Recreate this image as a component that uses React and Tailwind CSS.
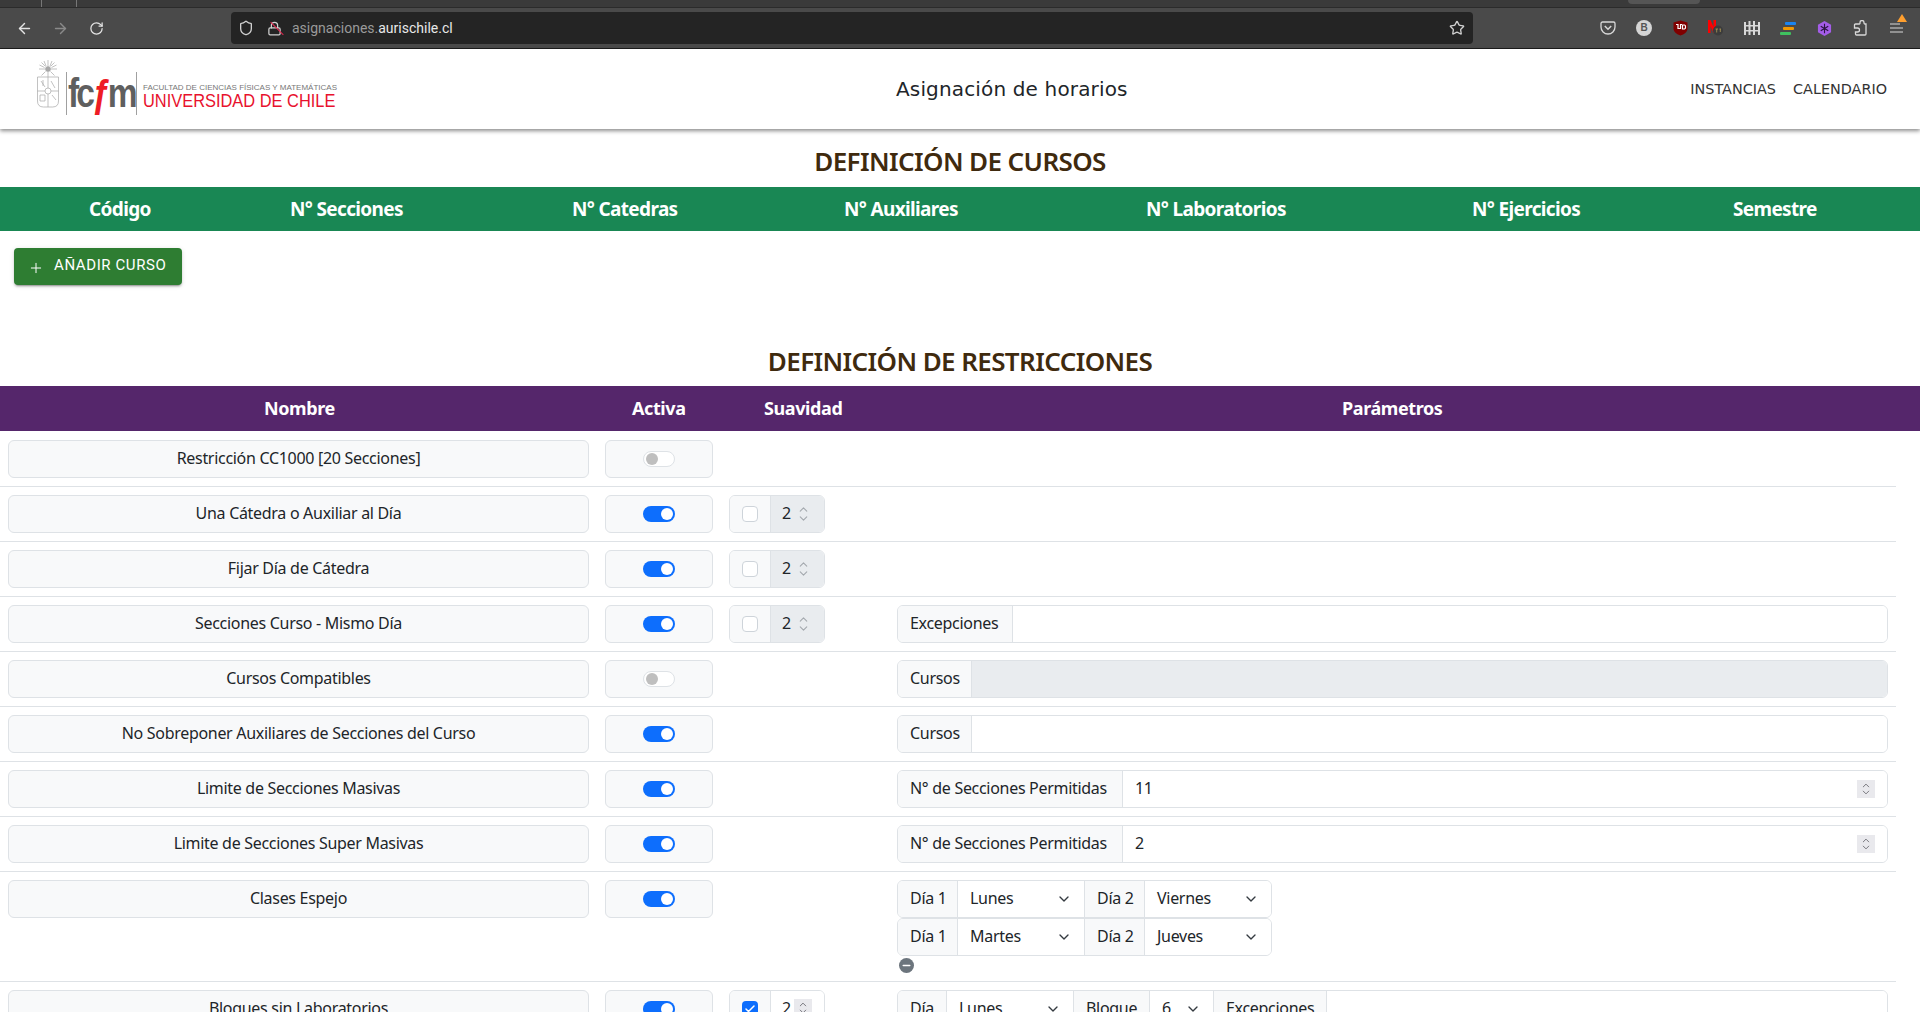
import React from "react";
import { ArrowLeft, ArrowRight, RotateCw, Shield, Lock, Star, Plus, ChevronDown, ChevronUp, Check, Minus } from "lucide-react";

const FONT = "font-['Noto_Sans',sans-serif]";

const Tool = ({ children }) => <div className="flex w-9 h-8 items-center justify-center">{children}</div>;

const BrowserBar = () => (
  <div className="h-[49px] bg-[#4a4a4a] border-b border-[#1c1c1c] tracking-normal">
    <div className="h-2 bg-[#3a3a3a] border-b border-[#2b2b2b] flex">
      <div className="w-[42px] border-r border-[#777]" />
      <div className="w-[35px] border-r border-[#777]" />
      <div className="ml-auto mr-[220px] w-[72px] h-1 rounded-b bg-[#555]" />
    </div>
    <div className="flex h-10 items-center">
      <div className="flex items-center w-[231px] pl-[6px] shrink-0">
        <Tool><ArrowLeft size={17} className="text-[#e4e4e4]" /></Tool>
        <Tool><ArrowRight size={17} className="text-[#8a8a8a]" /></Tool>
        <Tool><RotateCw size={15} className="text-[#e4e4e4]" /></Tool>
      </div>
      <div className="flex items-center w-[1242px] h-8 rounded bg-[#242424] pl-[7px] pr-2 shrink-0">
        <Shield size={16} className="text-[#d0d0d0]" />
        <span className="relative ml-[13px] mr-[10px]">
          <Lock size={15} className="text-[#d0d0d0]" />
          <span className="absolute left-[1px] top-[7px] w-[18px] h-px bg-[#e22850] rotate-45" />
        </span>
        <span className="text-[14px] text-[#9a9a9a] font-['Roboto',sans-serif]">asignaciones.<span className="text-[#e8e8e8]">aurischile.cl</span></span>
        <Star size={16} className="ml-auto text-[#d0d0d0]" />
      </div>
      <div className="flex items-center flex-1 pl-[117px]">
        <div className="w-9 flex justify-center">
          <svg width="16" height="14" viewBox="0 0 16 14" fill="none"><path d="M2.500 1h11A1.500 1.500 0 0 1 15 2.500V6A7 7 0 0 1 1 6V2.500A1.500 1.500 0 0 1 2.500 1z" stroke="#d8d8d8" strokeWidth="1.300" /><path d="M4.800 5l3.200 3.200L11.200 5" stroke="#d8d8d8" strokeWidth="1.500" /></svg>
        </div>
        <div className="w-9 flex justify-center">
          <div className="w-4 h-4 rounded-full bg-[#d5d5d5] text-[#555] text-[10px] font-bold leading-4 text-center font-['Liberation_Sans',sans-serif]">B</div>
        </div>
        <div className="w-9 flex justify-center">
          <svg width="15" height="16" viewBox="0 0 15 16"><path d="M.5 2.500 L7.500 .5 L14.500 2.500 V8.500 C14.500 12 11 14.500 7.500 15.500 C4 14.500 .5 12 .5 8.500Z" fill="#800000" /><path d="M3 4.500h2v4h2.500v-4h1.500M9.500 5h2a1.500 1.500 0 0 1 1 1.500v1a1.500 1.500 0 0 1-1 1.500h-2z" stroke="#fff" strokeWidth="1.200" fill="none" /></svg>
        </div>
        <div className="w-9 flex justify-center">
          <svg width="16" height="16" viewBox="0 0 16 16"><path d="M0 0h2.500l3 7V0H8v13H5.500L2.500 6v7H0z" fill="#f00" /><circle cx="10" cy="10.500" r="5" fill="#3c3c3c" /><path d="M7.500 9h2.500M8.700 9v3.500M11.500 9h1.500M12.300 9v3" stroke="#b09a55" strokeWidth="0.800" /></svg>
        </div>
        <div className="w-9 flex justify-center">
          <svg width="16" height="14" viewBox="0 0 16 14" fill="#d8d8d8"><rect x="0" y="1" width="2" height="13" /><rect x="4.500" y="0" width="2" height="14" /><rect x="9" y="0" width="2" height="14" /><rect x="14" y="1" width="2" height="13" /><rect x="0" y="4" width="16" height="1.500" /><rect x="0" y="9" width="16" height="1.500" /></svg>
        </div>
        <div className="w-9 flex justify-center">
          <svg width="16" height="13" viewBox="0 0 16 13"><rect x="5" y="0" width="11" height="3" rx="1" fill="#1a84f0" /><rect x="3" y="5" width="11" height="3" rx="1" fill="#f29900" /><rect x="0" y="10" width="11" height="3" rx="1" fill="#3fc15f" /></svg>
        </div>
        <div className="w-9 flex justify-center">
          <svg width="15" height="15" viewBox="0 0 16 16"><path d="M8 0l7 4v8l-7 4-7-4V4z" fill="#a45de8" /><path d="M8 3v10M4 5.500l8 5M12 5.500l-8 5" stroke="#2a1540" strokeWidth="1.200" /></svg>
        </div>
        <div className="w-9 flex justify-center">
          <svg width="14" height="16" viewBox="0 0 14 16" fill="none" stroke="#d8d8d8" strokeWidth="1.300"><path d="M5 4h1.500a1 1 0 0 0 .5-1V2.500a2 2 0 0 1 4 0V3a1 1 0 0 0 .8 1H13v10a1 1 0 0 1-1 1H3.500a1 1 0 0 1-1-1v-2h2a2 2 0 0 0 0-4h-3V5a1 1 0 0 1 1-1z" /></svg>
        </div>
        <div className="w-9 flex justify-center relative">
          <svg width="16" height="14" viewBox="0 0 16 14" stroke="#d8d8d8" strokeWidth="1.200"><path d="M2 3h10M2 7h13M2 11h13" /></svg>
          <span className="absolute left-[19px] top-[-7px] w-0 h-0 border-x-[5px] border-x-transparent border-b-[8px] border-b-[#ff9f2e]" />
        </div>
      </div>
    </div>
  </div>
);

const Logo = () => (
  <div className="flex items-start h-[56px] ml-[37px] mt-[-2px] font-['Liberation_Sans',sans-serif]">
    <svg width="22" height="48" viewBox="0 0 22 48" fill="none" stroke="#a8a8a8" strokeWidth="0.700">
      <circle cx="11" cy="9" r="2.500" fill="#a8a8a8" />
      <path d="M11 0v6M11 12v5M2 9h6M14 9h6M4.500 2.500l4 4M17.500 2.500l-4 4M4.500 15.500l4-4M17.500 15.500l-4-4M7 1l2 5M15 1l-2 5M2.500 5l5 2.500M19.500 5l-5 2.500" />
      <path d="M.5 17h21v24q0 6-6 6h-9q-6 0-6-6z" />
      <path d="M.5 31h21M11 17v30M4 21l4 6M14 21l4 7M6 20v6M15 35l4 5M3 35h5v6H3z" />
      <circle cx="11" cy="31" r="3" fill="#fff" />
    </svg>
    <div className="mt-[12px] ml-[7px] h-[43px] w-[71px] border-x border-[#a0a0a0] pl-[1px] whitespace-nowrap">
      <span className="inline-block mt-px font-bold text-[40px] leading-[40px] tracking-[-3.5px] text-[#5f5f5f] origin-left scale-x-[0.84]">fc<span className="text-[#ee1c25]">ƒ</span>m</span>
    </div>
    <div className="ml-[6px] mt-[23px] flex flex-col">
      <span className="text-[8px] leading-[9px] text-[#777] whitespace-nowrap">FACULTAD DE CIENCIAS FÍSICAS Y MATEMÁTICAS</span>
      <span className="text-[18.500px] leading-[18px] text-[#e8112d] whitespace-nowrap origin-left scale-x-[0.887]">UNIVERSIDAD DE CHILE</span>
    </div>
  </div>
);

const Header = () => (
  <div className="relative z-10 h-[80px] bg-white flex items-center justify-between shadow-[0_2px_4px_rgba(0,0,0,0.45)] font-['DejaVu_Sans',sans-serif] tracking-normal">
    <Logo />
    <div className="absolute left-[896px] top-[28px] text-[20px] leading-[24px] text-[#212529] tracking-[0.15px]">Asignación de horarios</div>
    <div className="flex gap-[17px] pr-[33px] mt-[2px] text-[14.400px] text-[#333]">
      <span>INSTANCIAS</span>
      <span>CALENDARIO</span>
    </div>
  </div>
);

const Title = ({ children, className }) => (
  <h2 className={`text-center text-[26px] leading-[32px] font-semibold text-[#3f2a0e] tracking-[-0.6px] ${className}`}>{children}</h2>
);

const Group = ({ children, className = "" }) => (
  <div className={`flex h-[38px] border border-[#dee2e6] rounded-md overflow-hidden ${className}`}>{children}</div>
);

const Label = ({ children, className = "" }) => (
  <div className={`flex items-center px-3 pb-[2px] bg-[#f8f9fa] border-r border-[#dee2e6] whitespace-nowrap shrink-0 ${className}`}>{children}</div>
);

const Select = ({ value, className = "" }) => (
  <div className={`flex items-center justify-between pl-3 pr-3 bg-white border-r border-[#dee2e6] last:border-r-0 ${className}`}>
    <span className="mb-[2px]">{value}</span>
    <ChevronDown size={16} strokeWidth={2} className="text-[#343a40]" />
  </div>
);

const Switch = ({ on }) => (
  <div className="w-[108px] h-[38px] border border-[#dee2e6] rounded-md bg-[#f8f9fa] flex items-center justify-center">
    {on ? (
      <div className="w-8 h-4 rounded-full bg-[#0d6efd] flex items-center justify-end pr-[2px]">
        <div className="w-3 h-3 rounded-full bg-white" />
      </div>
    ) : (
      <div className="w-8 h-4 rounded-full bg-white border border-[#dee2e6] flex items-center pl-[2px]">
        <div className="w-3 h-3 rounded-full bg-[#bfbfbf]" />
      </div>
    )}
  </div>
);

const Spinner = () => (
  <div className="flex flex-col items-center justify-center w-[18px] h-[18px] bg-[#e9e9ed] text-[#6f6f75]">
    <ChevronUp size={12} strokeWidth={2} className="mb-[-4px]" />
    <ChevronDown size={12} strokeWidth={2} />
  </div>
);

const Suavidad = ({ checked }) => (
  <div className="flex w-[96px] h-[38px] border border-[#dee2e6] rounded-md overflow-hidden">
    <div className="w-[41px] shrink-0 bg-[#f8f9fa] border-r border-[#dee2e6] flex items-center justify-center">
      {checked ? (
        <div className="w-4 h-4 rounded-[4px] bg-[#0d6efd] flex items-center justify-center"><Check size={12} strokeWidth={3} className="text-white" /></div>
      ) : (
        <div className="w-4 h-4 rounded-[4px] bg-white border border-[#ced4da]" />
      )}
    </div>
    <div className={`flex-1 flex items-center pl-[11px] ${checked ? "bg-white" : "bg-[#e9ecef]"}`}>
      <span className="mb-[2px]">2</span>
      {checked ? (
        <div className="ml-[3px] self-start mt-[8px]"><Spinner /></div>
      ) : (
        <div className="flex flex-col items-center text-[#a4a9ae] ml-[6px]">
          <ChevronUp size={13} strokeWidth={2} className="mb-[-4px]" />
          <ChevronDown size={13} strokeWidth={2} />
        </div>
      )}
    </div>
  </div>
);

const NumberParam = ({ value }) => (
  <Group>
    <Label className="w-[225px]">N° de Secciones Permitidas</Label>
    <div className="flex-1 flex items-center justify-between pl-3 pr-3 bg-white">
      <span className="mb-[2px]">{value}</span>
      <Spinner />
    </div>
  </Group>
);

const TextParam = ({ label, disabled, className }) => (
  <Group>
    <Label className={className}>{label}</Label>
    <div className={`flex-1 ${disabled ? "bg-[#e9ecef]" : "bg-white"}`} />
  </Group>
);

const Row = ({ name, on = true, suave, checked, children }) => (
  <div className="flex items-start w-[1896px] border-b border-[#dee2e6] pt-2 pb-2">
    <div className="w-[581px] ml-2 h-[38px] pb-[2px] border border-[#dee2e6] rounded-md bg-[#f8f9fa] flex items-center justify-center shrink-0">{name}</div>
    <div className="ml-4 shrink-0"><Switch on={on} /></div>
    <div className="ml-4 w-[168px] h-[38px] shrink-0">{suave && <Suavidad checked={checked} />}</div>
    <div className="flex-1 mr-2 min-w-0">{children}</div>
  </div>
);

const DayGroup = ({ a, b }) => (
  <Group className="w-[375px]">
    <Label className="w-[60px]">Día 1</Label>
    <Select value={a} className="w-[127px]" />
    <Label className="w-[60px]">Día 2</Label>
    <Select value={b} className="flex-1" />
  </Group>
);

export default function App() {
  return (
    <div className={`h-[1012px] w-[1920px] overflow-hidden bg-white text-[16px] text-[#212529] tracking-[-0.3px] ${FONT}`}>
      <BrowserBar />
      <Header />
      <Title className="mt-[16px]">DEFINICIÓN DE CURSOS</Title>
      <div className="mt-[10px] h-[44px] bg-[#198754] text-white font-bold text-[19px] relative tracking-[-0.65px]">
        <span className="absolute left-[89px] top-[8px]">Código</span>
        <span className="absolute left-[290px] top-[8px]">N° Secciones</span>
        <span className="absolute left-[572px] top-[8px]">N° Catedras</span>
        <span className="absolute left-[844px] top-[8px]">N° Auxiliares</span>
        <span className="absolute left-[1146px] top-[8px]">N° Laboratorios</span>
        <span className="absolute left-[1472px] top-[8px]">N° Ejercicios</span>
        <span className="absolute left-[1733px] top-[8px]">Semestre</span>
      </div>
      <button className="mt-[17px] ml-[14px] w-[168px] h-[37px] rounded bg-[#2e7d32] text-white flex items-center pl-[14px] gap-[10px] text-[15px] tracking-[0.6px] shadow-[0_3px_1px_-2px_rgba(0,0,0,0.2),0_2px_2px_0_rgba(0,0,0,0.14),0_1px_5px_0_rgba(0,0,0,0.12)] font-['Roboto',sans-serif]">
        <Plus size={16} strokeWidth={1.500} className="mt-[2px]" />
        <span className="mb-[2px]">AÑADIR CURSO</span>
      </button>
      <Title className="mt-[60px]">DEFINICIÓN DE RESTRICCIONES</Title>
      <div className="mt-[9px] mb-px h-[45px] bg-[#55266b] text-white font-bold text-[18px] relative tracking-[-0.4px]">
        <span className="absolute left-[264px] top-[9px]">Nombre</span>
        <span className="absolute left-[632px] top-[9px]">Activa</span>
        <span className="absolute left-[764px] top-[9px]">Suavidad</span>
        <span className="absolute left-[1342px] top-[9px]">Parámetros</span>
      </div>
      <Row name="Restricción CC1000 [20 Secciones]" on={false} />
      <Row name="Una Cátedra o Auxiliar al Día" suave />
      <Row name="Fijar Día de Cátedra" suave />
      <Row name="Secciones Curso - Mismo Día" suave><TextParam label="Excepciones" className="w-[115px]" /></Row>
      <Row name="Cursos Compatibles" on={false}><TextParam label="Cursos" disabled className="w-[74px]" /></Row>
      <Row name="No Sobreponer Auxiliares de Secciones del Curso"><TextParam label="Cursos" className="w-[74px]" /></Row>
      <Row name="Limite de Secciones Masivas"><NumberParam value="11" /></Row>
      <Row name="Limite de Secciones Super Masivas"><NumberParam value="2" /></Row>
      <Row name="Clases Espejo">
        <DayGroup a="Lunes" b="Viernes" />
        <DayGroup a="Martes" b="Jueves" />
        <div className="mt-[2px] w-[15px] h-[15px] ml-[2px] rounded-full bg-[#6c757d] flex items-center justify-center">
          <Minus size={11} strokeWidth={3.500} className="text-white" />
        </div>
      </Row>
      <Row name="Bloques sin Laboratorios" suave checked>
        <Group>
          <Label className="w-[49px]">Día</Label>
          <Select value="Lunes" className="w-[127px]" />
          <Label className="w-[76px]">Bloque</Label>
          <Select value="6" className="w-[64px]" />
          <Label className="w-[113px]">Excepciones</Label>
          <div className="flex-1 bg-white" />
        </Group>
      </Row>
    </div>
  );
}
